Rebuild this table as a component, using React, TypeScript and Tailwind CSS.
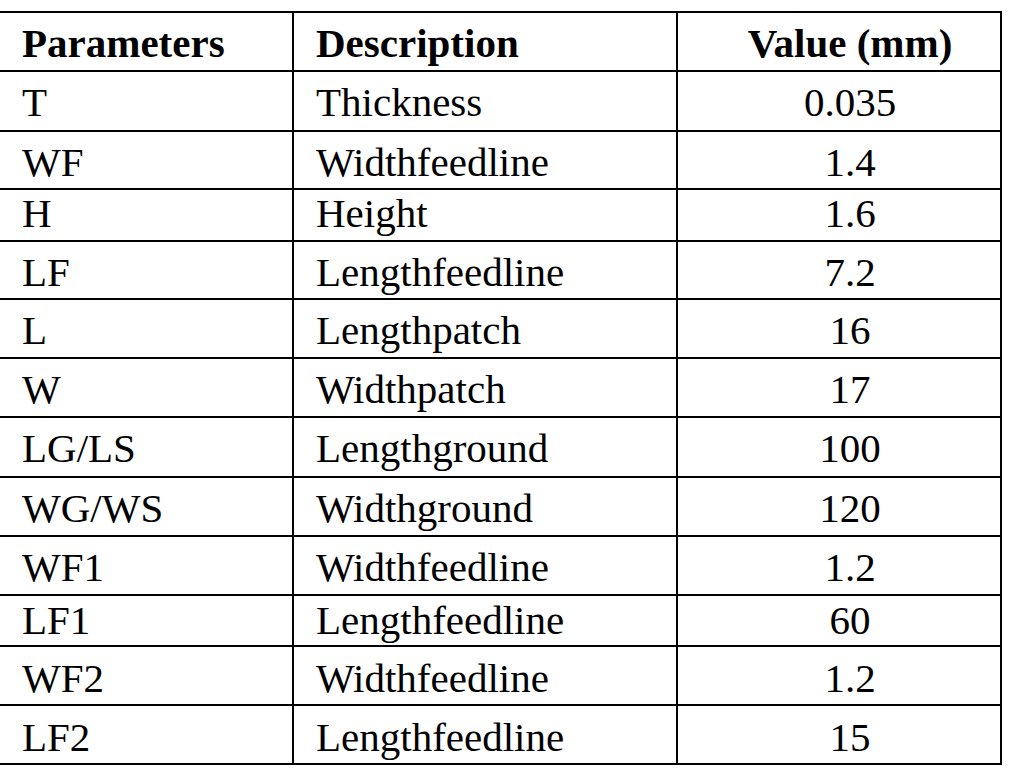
import React from "react";

type Row = { p: string; d: string; v: string; h: string; pt: string };

const rows: Row[] = [
  { p: "T", d: "Thickness", v: "0.035", h: "h-[60px]", pt: "pt-[10px]" },
  { p: "WF", d: "Widthfeedline", v: "1.4", h: "h-[58px]", pt: "pt-[10px]" },
  { p: "H", d: "Height", v: "1.6", h: "h-[52px]", pt: "pt-[3px]" },
  { p: "LF", d: "Lengthfeedline", v: "7.2", h: "h-[58px]", pt: "pt-[10px]" },
  { p: "L", d: "Lengthpatch", v: "16", h: "h-[59px]", pt: "pt-[10px]" },
  { p: "W", d: "Widthpatch", v: "17", h: "h-[59px]", pt: "pt-[10px]" },
  { p: "LG/LS", d: "Lengthground", v: "100", h: "h-[60px]", pt: "pt-[10px]" },
  { p: "WG/WS", d: "Widthground", v: "120", h: "h-[59px]", pt: "pt-[10px]" },
  { p: "WF1", d: "Widthfeedline", v: "1.2", h: "h-[59px]", pt: "pt-[10px]" },
  { p: "LF1", d: "Lengthfeedline", v: "60", h: "h-[51px]", pt: "pt-[4px]" },
  { p: "WF2", d: "Widthfeedline", v: "1.2", h: "h-[59px]", pt: "pt-[11px]" },
  { p: "LF2", d: "Lengthfeedline", v: "15", h: "h-[59px]", pt: "pt-[11px]" },
];

function TableRow({
  p,
  d,
  v,
  h,
  pt,
  bold,
}: {
  p: string;
  d: string;
  v: string;
  h: string;
  pt: string;
  bold?: boolean;
}) {
  return (
    <div
      className={`grid grid-cols-[294px_384px_1fr] border-t-2 border-black ${h} ${
        bold ? "font-bold" : "font-normal"
      }`}
    >
      <div className={`border-r-2 border-black pl-[22px] ${pt}`}>{p}</div>
      <div className={`border-r-2 border-black pl-[22px] ${pt}`}>{d}</div>
      <div className={`pl-[22px] text-center ${pt}`}>{v}</div>
    </div>
  );
}

export default function App() {
  return (
    <div
      className="w-[1009px] h-[782px] bg-white text-black pt-[11px]"
      style={{ fontFamily: '"Liberation Serif", "Times New Roman", serif' }}
    >
      <div className="w-[1002px] border-r-2 border-b-2 border-black text-[41px] leading-[41px]">
        <TableRow
          p="Parameters"
          d="Description"
          v="Value (mm)"
          h="h-[59px]"
          pt="pt-[10px]"
          bold
        />
        {rows.map((r, i) => (
          <TableRow key={i} {...r} />
        ))}
      </div>
    </div>
  );
}
